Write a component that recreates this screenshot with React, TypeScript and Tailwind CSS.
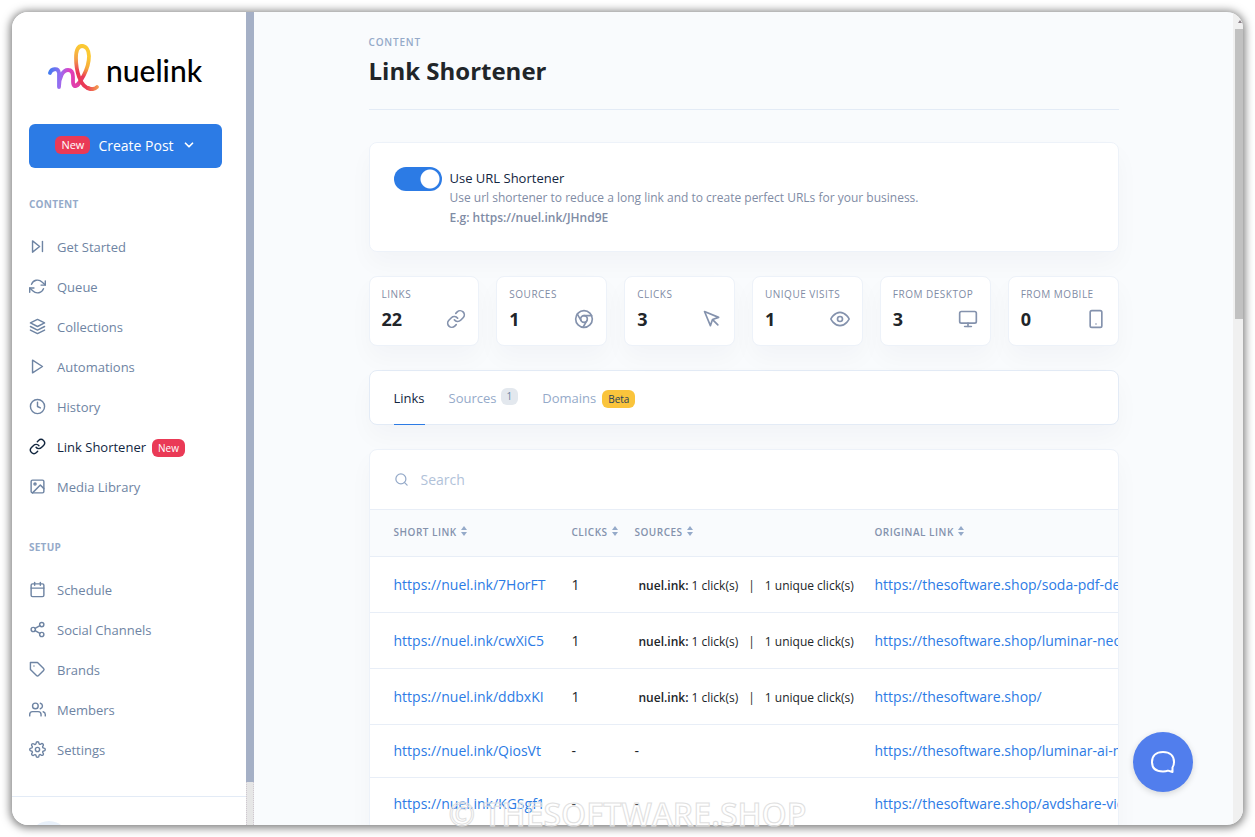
import type { IconType } from "react-icons";
import {
  FiCalendar,
  FiChevronDown,
  FiChrome,
  FiClock,
  FiEye,
  FiImage,
  FiLayers,
  FiLink,
  FiMonitor,
  FiMousePointer,
  FiPlay,
  FiRefreshCw,
  FiSearch,
  FiSettings,
  FiShare2,
  FiSkipForward,
  FiSmartphone,
  FiTag,
  FiUsers,
} from "react-icons/fi";

type NavItem = { label: string; icon: IconType; active?: boolean; badge?: string };

const CONTENT_NAV: NavItem[] = [
  { label: "Get Started", icon: FiSkipForward },
  { label: "Queue", icon: FiRefreshCw },
  { label: "Collections", icon: FiLayers },
  { label: "Automations", icon: FiPlay },
  { label: "History", icon: FiClock },
  { label: "Link Shortener", icon: FiLink, active: true, badge: "New" },
  { label: "Media Library", icon: FiImage },
];

const SETUP_NAV: NavItem[] = [
  { label: "Schedule", icon: FiCalendar },
  { label: "Social Channels", icon: FiShare2 },
  { label: "Brands", icon: FiTag },
  { label: "Members", icon: FiUsers },
  { label: "Settings", icon: FiSettings },
];

const STATS: { label: string; value: number; icon: IconType }[] = [
  { label: "Links", value: 22, icon: FiLink },
  { label: "Sources", value: 1, icon: FiChrome },
  { label: "Clicks", value: 3, icon: FiMousePointer },
  { label: "Unique visits", value: 1, icon: FiEye },
  { label: "From desktop", value: 3, icon: FiMonitor },
  { label: "From mobile", value: 0, icon: FiSmartphone },
];

const COLUMNS = ["Short link", "Clicks", "Sources", "Original link"];

const ROWS = [
  { short: "https://nuel.ink/7HorFT", clicks: 1, original: "https://thesoftware.shop/soda-pdf-desktop" },
  { short: "https://nuel.ink/cwXiC5", clicks: 1, original: "https://thesoftware.shop/luminar-neo" },
  { short: "https://nuel.ink/ddbxKI", clicks: 1, original: "https://thesoftware.shop/" },
  { short: "https://nuel.ink/QiosVt", clicks: 0, original: "https://thesoftware.shop/luminar-ai-ml" },
  { short: "https://nuel.ink/KGSgf1", clicks: 0, original: "https://thesoftware.shop/avdshare-video" },
];

function Logo() {
  return (
    <a href="#" className="flex h-12 items-center pl-9 text-black">
      <svg viewBox="0 0 52 48" className="h-12 w-[52px] shrink-0" fill="none" strokeWidth="3.8" strokeLinecap="round" strokeLinejoin="round">
        <defs>
          <linearGradient id="logo-n" gradientUnits="userSpaceOnUse" x1="0" y1="30" x2="32" y2="34">
            <stop offset="0" stopColor="#3b7cf0" />
            <stop offset="0.4" stopColor="#9b6cf0" />
            <stop offset="0.65" stopColor="#e040c0" />
            <stop offset="1" stopColor="#e23a9a" />
          </linearGradient>
          <linearGradient id="logo-up" gradientUnits="userSpaceOnUse" x1="28" y1="42" x2="38" y2="12">
            <stop offset="0" stopColor="#e040b0" />
            <stop offset="0.35" stopColor="#ea3a56" />
            <stop offset="0.65" stopColor="#f6a93b" />
            <stop offset="1" stopColor="#fbc934" />
          </linearGradient>
          <linearGradient id="logo-down" gradientUnits="userSpaceOnUse" x1="32" y1="2" x2="36" y2="44">
            <stop offset="0" stopColor="#fbc934" />
            <stop offset="0.3" stopColor="#f3a04a" />
            <stop offset="0.6" stopColor="#ea3a56" />
            <stop offset="1" stopColor="#ea3a56" />
          </linearGradient>
          <linearGradient id="logo-tail" gradientUnits="userSpaceOnUse" x1="38" y1="45" x2="50" y2="44">
            <stop offset="0" stopColor="#ea3a56" />
            <stop offset="1" stopColor="#f49a4e" />
          </linearGradient>
        </defs>
        <path d="M2 29C3 25 10 23 11 29V43C11 33 15 26 20 26C24 26 25 29 25 33V38C25 44 29 43 32 38" stroke="url(#logo-n)" />
        <path d="M27 42C32 40 41 25 41 12C41 6 38 2 34 2" stroke="url(#logo-up)" />
        <path d="M34 2C30 2 28 7 28 14C28 24 31 44 43 45" stroke="url(#logo-down)" />
        <path d="M40 44C43 46 47 45 49 43" stroke="url(#logo-tail)" />
      </svg>
      <span className="pt-1 pl-1.5 font-['Lato',sans-serif] text-[30px] font-medium leading-10">nuelink</span>
    </a>
  );
}

function NavSection({ title, items }: { title: string; items: NavItem[] }) {
  return (
    <section>
      <h6 className="text-[10px] font-bold leading-4 tracking-wide text-[#95aac9] uppercase">{title}</h6>
      <ul className="mt-4">
        {items.map(({ label, icon: Icon, active, badge }) => (
          <li key={label}>
            <a href="#" className={`flex h-10 items-center text-[13px] ${active ? "text-[#12263f]" : "text-[#6e84a3]"}`}>
              <Icon className="mr-[11px] mb-1 size-[17px]" />
              {label}
              {badge && (
                <span className="ml-1.5 rounded-md bg-[#ea3a56] px-1.5 text-[10px] font-medium leading-[18px] text-white">{badge}</span>
              )}
            </a>
          </li>
        ))}
      </ul>
    </section>
  );
}

function Sidebar() {
  return (
    <aside className="flex w-[242px] shrink-0 overflow-hidden bg-white">
      <div className="min-w-0 flex-1 pt-8">
        <Logo />
        <div className="pr-6 pl-[17px]">
          <button type="button" className="mt-8 mb-7 flex h-11 w-full items-center justify-center rounded-md bg-[#2c7be5] pb-0.5 text-[14px] text-white">
            <span className="mr-2 rounded-md bg-[#ea3a56] px-1.5 text-[11px] font-medium leading-[18px]">New</span>
            Create Post
            <FiChevronDown className="ml-2 size-3.5" strokeWidth={3} />
          </button>
          <NavSection title="Content" items={CONTENT_NAV} />
          <div className="mt-[31px]">
            <NavSection title="Setup" items={SETUP_NAV} />
          </div>
        </div>
        <div className="mt-[25px] border-t border-[#e3ebf6] px-[17px] pt-6">
          <div className="size-10 rounded-full bg-[#e8f0fa]" />
        </div>
      </div>
      <div className="w-2 shrink-0 border-x border-dotted border-[#cfc8d0] bg-[#e6e6e6]">
        <div className="-mx-px h-[770px] bg-[#a5b0c6]" />
      </div>
    </aside>
  );
}

function SortIcon() {
  return (
    <svg viewBox="0 0 6 10" className="mb-[3px] h-2.5 w-1.5" fill="#95aac9">
      <path d="M3 0L6 4H0ZM0 6H6L3 10Z" />
    </svg>
  );
}

function StatCards() {
  return (
    <div className="mt-6 grid grid-cols-6 gap-[17px]">
      {STATS.map(({ label, value, icon: Icon }) => (
        <div key={label} className="h-[70px] rounded-lg border border-[#edf2f9] bg-white px-3 pt-[9px] shadow-[0_12px_24px_rgba(18,38,63,0.03)]">
          <h6 className="text-[10px] leading-4 tracking-wider whitespace-nowrap text-[#7f8ca5] uppercase">{label}</h6>
          <div className="mt-[5px] flex items-center justify-between">
            <span className="text-lg font-bold leading-6 text-[#212529]">{value}</span>
            <Icon className="size-5 text-[#8492ad]" />
          </div>
        </div>
      ))}
    </div>
  );
}

function Tabs() {
  return (
    <nav className="mt-6 flex h-[55px] gap-6 rounded-lg border border-[#e3ebf6] bg-white px-6 text-[13px] text-[#95aac9] shadow-[0_12px_24px_rgba(18,38,63,0.03)]">
      <a href="#" className="-mb-px flex items-center border-b border-[#2c7be5] pt-0.5 text-[#12263f]">
        Links
      </a>
      <a href="#" className="flex items-center pt-0.5">
        Sources
        <span className="mb-1 ml-1 rounded-md bg-[#e3e8ee] px-1.5 text-[10px] leading-[17px] text-[#6e84a3]">1</span>
      </a>
      <a href="#" className="flex items-center pt-0.5">
        Domains
        <span className="ml-1.5 rounded-md bg-[#fac43c] px-1.5 text-[10px] leading-[18px] text-[#283e59]">Beta</span>
      </a>
    </nav>
  );
}

function LinksTable() {
  return (
    <div className="mt-6 overflow-hidden rounded-lg border border-[#edf2f9] bg-white shadow-[0_12px_24px_rgba(18,38,63,0.03)]">
      <label className="flex h-[60px] items-center border-b border-[#e8eef7] px-6">
        <FiSearch className="size-[15px] text-[#95aac9]" />
        <input
          type="search"
          aria-label="Search"
          placeholder="Search"
          className="ml-3 flex-1 text-[14px] outline-none placeholder:text-[#b1c2d9]"
        />
      </label>
      <table className="w-full table-fixed">
        <colgroup>
          <col className="w-[202px]" />
          <col className="w-[63px]" />
          <col className="w-60" />
          <col />
        </colgroup>
        <thead className="bg-[#f9fbfd]">
          <tr className="h-[46px] border-b border-[#e8eef7]">
            {COLUMNS.map((column) => (
              <th key={column} className="p-0 text-left first:pl-6">
                <button type="button" className="flex items-center gap-1 text-[10px] font-semibold tracking-wider whitespace-nowrap text-[#8492ad] uppercase">
                  {column}
                  <SortIcon />
                </button>
              </th>
            ))}
          </tr>
        </thead>
        <tbody>
          {ROWS.map((row) => (
            <tr key={row.short} className={`border-b border-[#e8eef7] text-[14px] text-[#212529] ${row.clicks ? "h-14" : "h-[53px]"}`}>
              <td className="p-0 pl-6">
                <a href="#" className="text-[#2c7be5]">{row.short}</a>
              </td>
              <td className="p-0">{row.clicks || "-"}</td>
              <td className="p-0 whitespace-nowrap">
                {row.clicks ? (
                  <span className="flex gap-2.5 pt-1 pl-1 text-[12px]">
                    <span>
                      <b className="font-semibold">nuel.ink:</b> {row.clicks} click(s)
                    </span>
                    <span>|</span>
                    <span>{row.clicks} unique click(s)</span>
                  </span>
                ) : (
                  "-"
                )}
              </td>
              <td className="overflow-hidden p-0 whitespace-nowrap">
                <a href="#" className="text-[#2c7be5]">{row.original}</a>
              </td>
            </tr>
          ))}
        </tbody>
      </table>
    </div>
  );
}

export default function App() {
  return (
    <div className="relative h-screen overflow-hidden bg-white p-3 font-['Open_Sans',sans-serif]">
      <div className="flex h-full overflow-hidden rounded-2xl bg-[#f9fbfd] shadow-[0_1px_9px_2px_rgba(0,0,0,0.5)]">
        <Sidebar />
        <main className="min-w-0 flex-1 overflow-hidden">
          <div className="mx-auto max-w-[750px] pt-[22px]">
            <header className="border-b border-[#e3ebf6] pb-[21px]">
              <h6 className="text-[10px] font-semibold leading-4 tracking-[0.08em] text-[#95aac9] uppercase">Content</h6>
              <h1 className="mt-1 text-2xl font-bold leading-[34px] text-[#212529]">Link Shortener</h1>
            </header>

            <section className="mt-8 flex gap-2 rounded-lg border border-[#edf2f9] bg-white px-6 pt-6 pb-[23px] shadow-[0_12px_24px_rgba(18,38,63,0.03)]">
              <input
                id="use-shortener"
                type="checkbox"
                role="switch"
                defaultChecked
                className="h-6 w-12 appearance-none rounded-full bg-[#2c7be5] bg-[radial-gradient(circle_at_36px_12px,white_9px,transparent_10px)]"
              />
              <div className="pt-px text-[12px] leading-5 text-[#7f8ca5]">
                <label htmlFor="use-shortener" className="block text-[13px] leading-5 text-[#12263f]">
                  Use URL Shortener
                </label>
                <p>Use url shortener to reduce a long link and to create perfect URLs for your business.</p>
                <p className="font-semibold">E.g: https://nuel.ink/JHnd9E</p>
              </div>
            </section>

            <StatCards />
            <Tabs />
            <LinksTable />
          </div>
        </main>
        <div className="flex w-2.5 shrink-0 flex-col items-end bg-[#f0f0f0]">
          <svg viewBox="0 0 8 17" className="h-[17px] w-2" fill="#8b8088">
            <path d="M3 11L5 8L7 11Z" />
          </svg>
          <div className="h-[290px] w-2 bg-[#c1c1c1]" />
        </div>
      </div>

      <button
        type="button"
        aria-label="Open chat"
        className="absolute right-[62px] bottom-[45px] flex size-[60px] items-center justify-center rounded-full bg-[#517eed] shadow-[0_2px_6px_rgba(0,0,0,0.15)]"
      >
        <svg viewBox="0 0 24 22" className="h-[22px] w-6" fill="none" stroke="white" strokeWidth="2" strokeLinejoin="round">
          <path d="M21.5 16.5V21L17 19.6C15.5 20.3 13.8 20.5 12 20.5C5 20.5 1 17 1 11C1 5 5 1 12 1C19 1 23 5 23 11C23 13.2 22.6 15 21.5 16.5Z" />
        </svg>
      </button>

      <p className="pointer-events-none absolute inset-x-0 bottom-0 text-center text-[32px] font-semibold leading-[46px] text-white/20 [-webkit-text-stroke:1px_#e0e0e0]">
        © THESOFTWARE.SHOP
      </p>
    </div>
  );
}
